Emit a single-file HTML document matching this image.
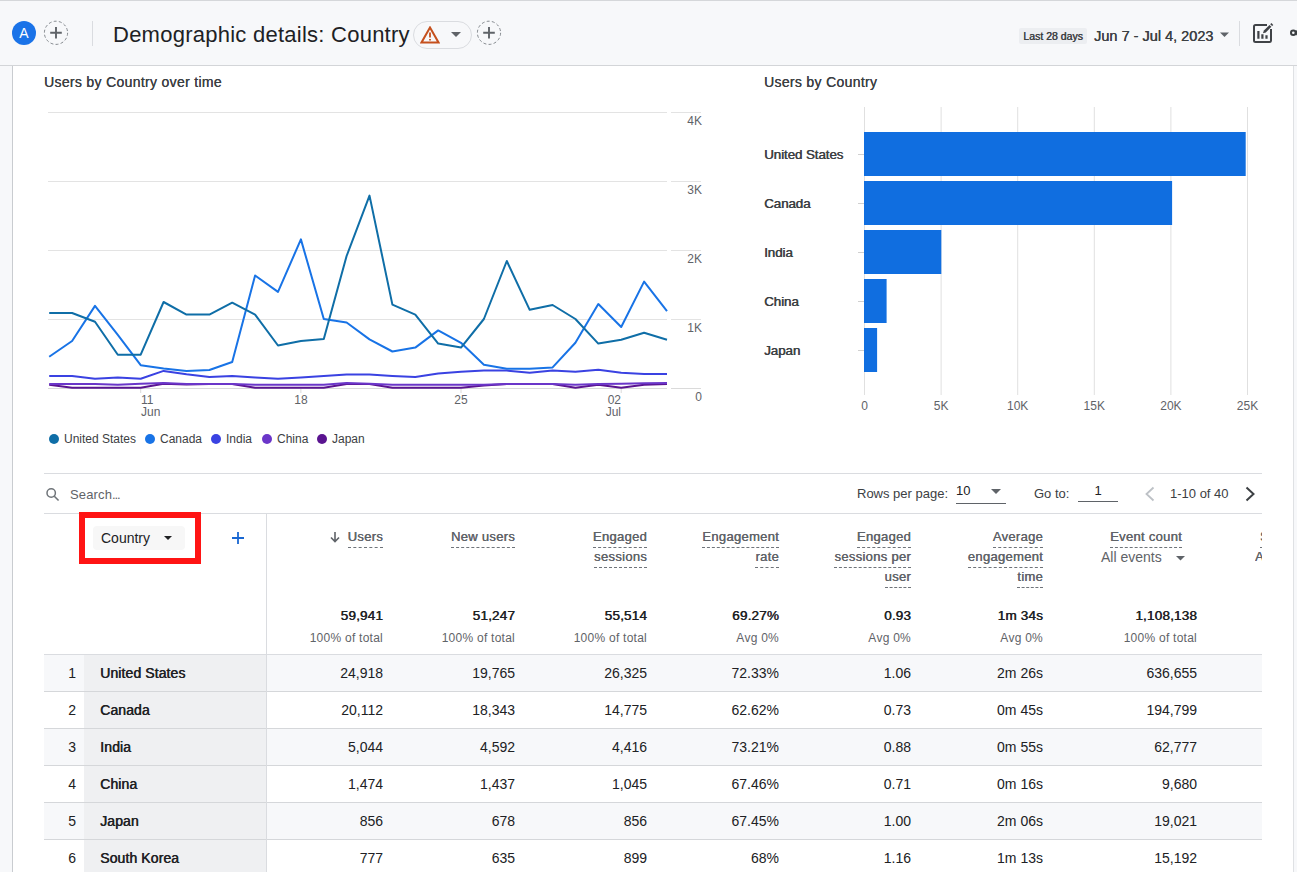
<!DOCTYPE html>
<html><head><meta charset="utf-8">
<style>
*{margin:0;padding:0;box-sizing:border-box}
html,body{width:1297px;height:872px;overflow:hidden;background:#f7f8fa;font-family:"Liberation Sans",sans-serif;color:#202124}
.a{position:absolute;white-space:nowrap}
#hdr{position:absolute;left:0;top:0;width:1297px;height:66px;background:#f7f8fa;border-top:1px solid #d5d7da;border-bottom:1px solid #d3d5d8}
#card{position:absolute;left:12px;top:66px;width:1282px;height:806px;background:#fff;border-left:1px solid #c9ccd0;border-right:1px solid #dfe1e4}
.ttl{font-size:14px;color:#3c4043;line-height:16px;letter-spacing:0.32px;text-shadow:0.15px 0 0 #3c4043}
.ylab{font-size:12px;color:#5f6368;line-height:14px}
.leg{font-size:12px;color:#3c4043;line-height:14px}
.dot{position:absolute;width:10px;height:10px;border-radius:50%}
.hd{font-size:13px;color:#5f6368;text-align:right;line-height:20px;letter-spacing:0.3px;text-shadow:0.35px 0 0 #5f6368}
.hd span{border-bottom:1px dashed #6f747a;padding-bottom:3px}
.tot{font-size:13.5px;color:#202124;text-align:right;line-height:16px;letter-spacing:0.2px;text-shadow:0.5px 0 0 #202124}
.sub{font-size:12px;color:#5f6368;text-align:right;line-height:14px;letter-spacing:0.25px}
.cell{font-size:14px;color:#202124;text-align:right;line-height:16px}
.cty{font-size:14px;color:#202124;line-height:16px;letter-spacing:0.1px;text-shadow:0.5px 0 0 #202124}
</style></head><body>
<div id="hdr"></div>
<div id="card"></div>

<div class="a" style="left:12px;top:21px;width:24px;height:24px;border-radius:50%;background:#1a73e8;color:#fff;font-size:14px;line-height:24px;text-align:center">A</div>
<svg class="a" style="left:43px;top:20px" width="26" height="26" viewBox="0 0 26 26"><circle cx="13" cy="12.8" r="11.6" fill="none" stroke="#858a8f" stroke-width="1" stroke-dasharray="3 2.2"/><path d="M13 7v11.5M7.2 12.8h11.6" stroke="#5f6368" stroke-width="1.9"/></svg>
<div class="a" style="left:92px;top:21px;width:1px;height:25px;background:#dadce0"></div>
<div class="a" style="left:113px;top:21.5px;font-size:22px;letter-spacing:0.25px;line-height:26px;color:#202124">Demographic details: Country</div>
<div class="a" style="left:413px;top:21px;width:59px;height:28px;border:1px solid #dadce0;border-radius:14px"></div>
<svg class="a" style="left:420px;top:26px" width="20" height="18" viewBox="0 0 20 18"><path d="M10 1.5 L18.5 16.5 H1.5 Z" fill="none" stroke="#c5501e" stroke-width="2" stroke-linejoin="miter"/><path d="M10 6.5v5M10 13v1.6" stroke="#c5501e" stroke-width="1.8"/></svg>
<svg class="a" style="left:451px;top:32px" width="10" height="6" viewBox="0 0 10 6"><path d="M0 0h10L5 5z" fill="#5f6368"/></svg>
<svg class="a" style="left:476px;top:20px" width="26" height="26" viewBox="0 0 26 26"><circle cx="13" cy="12.8" r="11.6" fill="none" stroke="#858a8f" stroke-width="1" stroke-dasharray="3 2.2"/><path d="M13 7v11.5M7.2 12.8h11.6" stroke="#5f6368" stroke-width="1.9"/></svg>
<div class="a" style="left:1019px;top:28px;width:68px;height:16px;background:#eceef1;border-radius:2px;font-size:10.5px;color:#3c4043;text-shadow:0.4px 0 0 #3c4043;line-height:16px;text-align:center">Last 28 days</div>
<div class="a" style="left:1094px;top:27px;font-size:14.5px;line-height:18px;color:#3c4043;text-shadow:0.3px 0 0 #3c4043">Jun 7 - Jul 4, 2023</div>
<svg class="a" style="left:1220px;top:32px" width="10" height="6" viewBox="0 0 10 6"><path d="M0 0.5h9L4.5 5z" fill="#5f6368"/></svg>
<div class="a" style="left:1239px;top:21px;width:1px;height:25px;background:#dadce0"></div>
<svg class="a" style="left:1252px;top:22px" width="24" height="24" viewBox="0 0 24 24"><path d="M15 3H3.5Q2 3 2 4.5V18.5Q2 20 3.5 20H17.5Q19 20 19 18.5V7" fill="none" stroke="#404347" stroke-width="2"/><path d="M6.4 9v7.8M10.4 12.2v4.6M14.5 13.2v3.6" stroke="#404347" stroke-width="2.2"/><path d="M10.9 11.3L11.9 8.5 17.5 2.9 19.4 4.8 13.8 10.4z" fill="#404347"/><path d="M18.2 2.2L19.4 1 21.3 2.9 20.1 4.1z" fill="#404347"/></svg>
<svg class="a" style="left:1289px;top:27px" width="12" height="12" viewBox="0 0 12 12"><circle cx="4.3" cy="5.8" r="2.3" fill="none" stroke="#3c4043" stroke-width="2"/><circle cx="10" cy="5.8" r="2.3" fill="none" stroke="#3c4043" stroke-width="2"/></svg>
<div class="a ttl" style="left:44px;top:73.5px">Users by Country over time</div>
<svg class="a" style="left:0;top:0" width="760" height="460" viewBox="0 0 760 460"><path d="M48 112.5H667M671 112.5H701" stroke="#e3e3e3" stroke-width="1"/><path d="M48 181.5H667M671 181.5H701" stroke="#e3e3e3" stroke-width="1"/><path d="M48 250.5H667M671 250.5H701" stroke="#e3e3e3" stroke-width="1"/><path d="M48 319.5H667M671 319.5H701" stroke="#e3e3e3" stroke-width="1"/><path d="M48 388.5H667M671 388.5H701" stroke="#dadada" stroke-width="1"/><path d="M140.7 389V393" stroke="#dadada" stroke-width="1"/><path d="M300.9 389V393" stroke="#dadada" stroke-width="1"/><path d="M461.0 389V393" stroke="#dadada" stroke-width="1"/><path d="M621.2 389V393" stroke="#dadada" stroke-width="1"/><path d="M49.2,384.8 L72.1,387.8 L95.0,387.8 L117.8,387.8 L140.7,387.8 L163.6,383.8 L186.5,384.5 L209.4,384.1 L232.2,384.1 L255.1,387.8 L278.0,387.8 L300.9,387.8 L323.8,387.8 L346.6,384.1 L369.5,384.1 L392.4,387.8 L415.3,387.8 L438.2,387.8 L461.0,387.8 L483.9,385.4 L506.8,384.1 L529.7,384.1 L552.6,384.1 L575.4,387.8 L598.3,384.8 L621.2,387.8 L644.1,384.8 L667.0,384.1" fill="none" stroke="#5a1490" stroke-width="2" stroke-linejoin="round"/><path d="M49.2,384.1 L72.1,384.1 L95.0,384.1 L117.8,384.8 L140.7,383.8 L163.6,382.9 L186.5,384.1 L209.4,384.1 L232.2,384.1 L255.1,384.8 L278.0,384.8 L300.9,384.8 L323.8,384.8 L346.6,382.9 L369.5,383.8 L392.4,384.8 L415.3,384.8 L438.2,384.8 L461.0,384.8 L483.9,384.8 L506.8,384.1 L529.7,384.1 L552.6,384.1 L575.4,384.8 L598.3,384.1 L621.2,383.8 L644.1,383.3 L667.0,382.9" fill="none" stroke="#6b36c9" stroke-width="2" stroke-linejoin="round"/><path d="M49.2,376.1 L72.1,376.1 L95.0,378.8 L117.8,377.6 L140.7,378.8 L163.6,370.9 L186.5,374.3 L209.4,377.0 L232.2,375.9 L255.1,377.6 L278.0,378.8 L300.9,377.6 L323.8,375.9 L346.6,374.6 L369.5,374.6 L392.4,375.9 L415.3,377.0 L438.2,373.4 L461.0,371.8 L483.9,370.6 L506.8,370.6 L529.7,372.7 L552.6,370.6 L575.4,371.8 L598.3,369.7 L621.2,372.8 L644.1,373.9 L667.0,373.9" fill="none" stroke="#3a42e2" stroke-width="2" stroke-linejoin="round"/><path d="M49.2,356.8 L72.1,341.0 L95.0,305.9 L117.8,334.9 L140.7,365.2 L163.6,368.4 L186.5,371.0 L209.4,370.0 L232.2,362.0 L255.1,275.5 L278.0,291.9 L300.9,239.4 L323.8,319.0 L346.6,322.5 L369.5,339.4 L392.4,351.5 L415.3,347.6 L438.2,330.4 L461.0,342.8 L483.9,364.7 L506.8,368.7 L529.7,368.7 L552.6,367.4 L575.4,342.8 L598.3,304.0 L621.2,327.0 L644.1,281.6 L667.0,311.2" fill="none" stroke="#1873e6" stroke-width="2" stroke-linejoin="round"/><path d="M49.2,313.0 L72.1,313.0 L95.0,321.7 L117.8,354.7 L140.7,354.7 L163.6,302.0 L186.5,314.6 L209.4,314.6 L232.2,302.7 L255.1,314.6 L278.0,345.5 L300.9,341.0 L323.8,338.9 L346.6,256.0 L369.5,195.6 L392.4,304.6 L415.3,314.6 L438.2,343.6 L461.0,347.6 L483.9,319.0 L506.8,261.0 L529.7,309.8 L552.6,305.0 L575.4,319.0 L598.3,343.6 L621.2,339.7 L644.1,332.8 L667.0,339.7" fill="none" stroke="#0f6ea7" stroke-width="2" stroke-linejoin="round"/></svg>
<div class="a ylab" style="left:660px;width:42px;text-align:right;top:114px">4K</div>
<div class="a ylab" style="left:660px;width:42px;text-align:right;top:183px">3K</div>
<div class="a ylab" style="left:660px;width:42px;text-align:right;top:252px">2K</div>
<div class="a ylab" style="left:660px;width:42px;text-align:right;top:321px">1K</div>
<div class="a ylab" style="left:660px;width:42px;text-align:right;top:390px">0</div>
<div class="a ylab" style="left:141px;top:393px">11</div>
<div class="a ylab" style="left:141px;top:405px">Jun</div>
<div class="a ylab" style="left:281px;width:40px;text-align:center;top:393px">18</div>
<div class="a ylab" style="left:441px;width:40px;text-align:center;top:393px">25</div>
<div class="a ylab" style="left:581px;width:40px;text-align:right;top:393px">02</div>
<div class="a ylab" style="left:581px;width:40px;text-align:right;top:405px">Jul</div>
<div class="dot" style="left:49px;top:434px;background:#0f6ea7"></div>
<div class="a leg" style="left:64px;top:432px">United States</div>
<div class="dot" style="left:145px;top:434px;background:#1873e6"></div>
<div class="a leg" style="left:160px;top:432px">Canada</div>
<div class="dot" style="left:211px;top:434px;background:#3a42e2"></div>
<div class="a leg" style="left:226px;top:432px">India</div>
<div class="dot" style="left:262px;top:434px;background:#6b36c9"></div>
<div class="a leg" style="left:277px;top:432px">China</div>
<div class="dot" style="left:317px;top:434px;background:#5a1490"></div>
<div class="a leg" style="left:332px;top:432px">Japan</div>
<div class="a ttl" style="left:764px;top:73.5px">Users by Country</div>
<svg class="a" style="left:740px;top:100px" width="540" height="300" viewBox="740 100 540 300"><path d="M864.5 107V395" stroke="#e0e0e0" stroke-width="1"/><path d="M941.1 107V395" stroke="#e0e0e0" stroke-width="1"/><path d="M1017.7 107V395" stroke="#e0e0e0" stroke-width="1"/><path d="M1094.3 107V395" stroke="#e0e0e0" stroke-width="1"/><path d="M1170.9 107V395" stroke="#e0e0e0" stroke-width="1"/><path d="M1247.5 107V395" stroke="#e0e0e0" stroke-width="1"/><rect x="864" y="132" width="381.7" height="44" fill="#106ee0"/><path d="M858 154.5H864" stroke="#d0d0d0" stroke-width="1"/><rect x="864" y="181" width="308.1" height="44" fill="#106ee0"/><path d="M858 203.5H864" stroke="#d0d0d0" stroke-width="1"/><rect x="864" y="230" width="77.3" height="44" fill="#106ee0"/><path d="M858 252.5H864" stroke="#d0d0d0" stroke-width="1"/><rect x="864" y="279" width="22.6" height="44" fill="#106ee0"/><path d="M858 301.5H864" stroke="#d0d0d0" stroke-width="1"/><rect x="864" y="328" width="13.1" height="44" fill="#106ee0"/><path d="M858 350.5H864" stroke="#d0d0d0" stroke-width="1"/></svg>
<div class="a" style="left:764px;top:147px;font-size:13.4px;letter-spacing:-0.1px;color:#3c4043;text-shadow:0.5px 0 0 #3c4043;line-height:16px">United States</div>
<div class="a" style="left:764px;top:196px;font-size:13.4px;letter-spacing:-0.1px;color:#3c4043;text-shadow:0.5px 0 0 #3c4043;line-height:16px">Canada</div>
<div class="a" style="left:764px;top:245px;font-size:13.4px;letter-spacing:-0.1px;color:#3c4043;text-shadow:0.5px 0 0 #3c4043;line-height:16px">India</div>
<div class="a" style="left:764px;top:294px;font-size:13.4px;letter-spacing:-0.1px;color:#3c4043;text-shadow:0.5px 0 0 #3c4043;line-height:16px">China</div>
<div class="a" style="left:764px;top:343px;font-size:13.4px;letter-spacing:-0.1px;color:#3c4043;text-shadow:0.5px 0 0 #3c4043;line-height:16px">Japan</div>
<div class="a ylab" style="left:844.5px;width:40px;text-align:center;top:399px">0</div>
<div class="a ylab" style="left:921.1px;width:40px;text-align:center;top:399px">5K</div>
<div class="a ylab" style="left:997.7px;width:40px;text-align:center;top:399px">10K</div>
<div class="a ylab" style="left:1074.3px;width:40px;text-align:center;top:399px">15K</div>
<div class="a ylab" style="left:1150.9px;width:40px;text-align:center;top:399px">20K</div>
<div class="a ylab" style="left:1227.5px;width:40px;text-align:center;top:399px">25K</div>
<div class="a" style="left:44px;top:473px;width:1218px;height:1px;background:#dadce0"></div>
<svg class="a" style="left:45px;top:487px" width="16" height="16" viewBox="0 0 16 16"><circle cx="6.2" cy="6" r="4.2" fill="none" stroke="#6f7479" stroke-width="1.5"/><path d="M9.3 9.2l4.3 4.3" stroke="#6f7479" stroke-width="1.6"/></svg>
<div class="a" style="left:70px;top:487px;font-size:13px;color:#5f6368;line-height:16px;letter-spacing:0.15px">Search<span style="letter-spacing:-1.1px">...</span></div>
<div class="a" style="left:857px;top:486px;font-size:13px;color:#3c4043;line-height:16px">Rows per page:</div>
<div class="a" style="left:956px;top:483px;font-size:13px;color:#202124;line-height:16px">10</div>
<svg class="a" style="left:991px;top:489px" width="10" height="5" viewBox="0 0 10 5"><path d="M0 0h10L5 5z" fill="#5f6368"/></svg>
<div class="a" style="left:956px;top:503px;width:50px;height:1px;background:#5f6368"></div>
<div class="a" style="left:1034px;top:486px;font-size:13px;color:#3c4043;line-height:16px">Go to:</div>
<div class="a" style="left:1078px;top:483px;width:40px;text-align:center;font-size:13px;color:#202124;line-height:16px">1</div>
<div class="a" style="left:1078px;top:501px;width:40px;height:1px;background:#5f6368"></div>
<svg class="a" style="left:1143px;top:486px" width="14" height="16" viewBox="0 0 14 16"><path d="M10.5 1.5L3.5 8l7 6.5" fill="none" stroke="#bdc1c6" stroke-width="1.8"/></svg>
<div class="a" style="left:1170px;top:486px;font-size:13px;color:#3c4043;line-height:16px">1-10 of 40</div>
<svg class="a" style="left:1243px;top:486px" width="14" height="16" viewBox="0 0 14 16"><path d="M3.5 1.5L10.5 8l-7 6.5" fill="none" stroke="#3c4043" stroke-width="2"/></svg>
<div class="a" style="left:44px;top:513px;width:1218px;height:1px;background:#dadce0"></div>
<div class="a" style="left:79px;top:512px;width:122px;height:52px;border:6px solid #ff1414"></div>
<div class="a" style="left:93px;top:526px;width:92px;height:24px;background:#f7f7f7;border-radius:4px"></div>
<div class="a" style="left:101px;top:530px;font-size:14px;color:#202124;line-height:16px">Country</div>
<svg class="a" style="left:164px;top:536px" width="8" height="4" viewBox="0 0 8 4"><path d="M0 0h8L4 4z" fill="#202124"/></svg>
<svg class="a" style="left:231px;top:531px" width="14" height="14" viewBox="0 0 14 14"><path d="M7 1v12M1 7h12" stroke="#1967d2" stroke-width="1.8"/></svg>
<div class="a" style="left:266px;top:513px;width:1px;height:359px;background:#dadce0"></div>
<div class="a hd" style="left:183px;width:200px;top:527px"><span>Users</span></div>
<div class="a hd" style="left:315px;width:200px;top:527px"><span>New users</span></div>
<div class="a hd" style="left:447px;width:200px;top:527px"><span>Engaged</span><br><span>sessions</span></div>
<div class="a hd" style="left:579px;width:200px;top:527px"><span>Engagement</span><br><span>rate</span></div>
<div class="a hd" style="left:711px;width:200px;top:527px"><span>Engaged</span><br><span>sessions per</span><br><span>user</span></div>
<div class="a hd" style="left:843px;width:200px;top:527px"><span>Average</span><br><span>engagement</span><br><span>time</span></div>
<div class="a hd" style="left:982px;width:200px;top:527px"><span>Event count</span></div>
<svg class="a" style="left:329px;top:531px" width="12" height="12" viewBox="0 0 12 12"><path d="M6 1v9.5M2 6.5l4 4 4-4" fill="none" stroke="#5f6368" stroke-width="1.6"/></svg>
<div class="a" style="left:1101px;top:549px;font-size:14px;color:#5f6368;line-height:16px">All events</div>
<svg class="a" style="left:1176px;top:556px" width="9" height="5" viewBox="0 0 9 5"><path d="M0 0h9L4.5 4.5z" fill="#5f6368"/></svg>
<div class="a" style="left:1255px;top:520px;width:7px;height:60px;overflow:hidden"><div class="a hd" style="left:0;top:7px;text-align:left"><span style="margin-left:5px">S</span><br>All</div></div>
<div class="a tot" style="left:183px;width:200px;top:608px">59,941</div>
<div class="a sub" style="left:183px;width:200px;top:631px">100% of total</div>
<div class="a tot" style="left:315px;width:200px;top:608px">51,247</div>
<div class="a sub" style="left:315px;width:200px;top:631px">100% of total</div>
<div class="a tot" style="left:447px;width:200px;top:608px">55,514</div>
<div class="a sub" style="left:447px;width:200px;top:631px">100% of total</div>
<div class="a tot" style="left:579px;width:200px;top:608px">69.27%</div>
<div class="a sub" style="left:579px;width:200px;top:631px">Avg 0%</div>
<div class="a tot" style="left:711px;width:200px;top:608px">0.93</div>
<div class="a sub" style="left:711px;width:200px;top:631px">Avg 0%</div>
<div class="a tot" style="left:843px;width:200px;top:608px">1m 34s</div>
<div class="a sub" style="left:843px;width:200px;top:631px">Avg 0%</div>
<div class="a tot" style="left:997px;width:200px;top:608px">1,108,138</div>
<div class="a sub" style="left:997px;width:200px;top:631px">100% of total</div>
<div class="a" style="left:44px;top:654px;width:1218px;height:1px;background:#dadce0"></div>
<div class="a" style="left:44px;top:655px;width:1218px;height:36px;background:#f7f8fa"></div>
<div class="a" style="left:84px;top:655px;width:182px;height:36px;background:#eff0f2"></div>
<div class="a" style="left:44px;top:691px;width:1218px;height:1px;background:#d5d7da"></div>
<div class="a cell" style="left:36px;width:40px;top:665px">1</div>
<div class="a cty" style="left:100px;top:665px">United States</div>
<div class="a cell" style="left:183px;width:200px;top:665px">24,918</div>
<div class="a cell" style="left:315px;width:200px;top:665px">19,765</div>
<div class="a cell" style="left:447px;width:200px;top:665px">26,325</div>
<div class="a cell" style="left:579px;width:200px;top:665px">72.33%</div>
<div class="a cell" style="left:711px;width:200px;top:665px">1.06</div>
<div class="a cell" style="left:843px;width:200px;top:665px">2m 26s</div>
<div class="a cell" style="left:997px;width:200px;top:665px">636,655</div>
<div class="a" style="left:44px;top:692px;width:1218px;height:36px;background:#ffffff"></div>
<div class="a" style="left:84px;top:692px;width:182px;height:36px;background:#eff0f2"></div>
<div class="a" style="left:44px;top:728px;width:1218px;height:1px;background:#d5d7da"></div>
<div class="a cell" style="left:36px;width:40px;top:702px">2</div>
<div class="a cty" style="left:100px;top:702px">Canada</div>
<div class="a cell" style="left:183px;width:200px;top:702px">20,112</div>
<div class="a cell" style="left:315px;width:200px;top:702px">18,343</div>
<div class="a cell" style="left:447px;width:200px;top:702px">14,775</div>
<div class="a cell" style="left:579px;width:200px;top:702px">62.62%</div>
<div class="a cell" style="left:711px;width:200px;top:702px">0.73</div>
<div class="a cell" style="left:843px;width:200px;top:702px">0m 45s</div>
<div class="a cell" style="left:997px;width:200px;top:702px">194,799</div>
<div class="a" style="left:44px;top:729px;width:1218px;height:36px;background:#f7f8fa"></div>
<div class="a" style="left:84px;top:729px;width:182px;height:36px;background:#eff0f2"></div>
<div class="a" style="left:44px;top:765px;width:1218px;height:1px;background:#d5d7da"></div>
<div class="a cell" style="left:36px;width:40px;top:739px">3</div>
<div class="a cty" style="left:100px;top:739px">India</div>
<div class="a cell" style="left:183px;width:200px;top:739px">5,044</div>
<div class="a cell" style="left:315px;width:200px;top:739px">4,592</div>
<div class="a cell" style="left:447px;width:200px;top:739px">4,416</div>
<div class="a cell" style="left:579px;width:200px;top:739px">73.21%</div>
<div class="a cell" style="left:711px;width:200px;top:739px">0.88</div>
<div class="a cell" style="left:843px;width:200px;top:739px">0m 55s</div>
<div class="a cell" style="left:997px;width:200px;top:739px">62,777</div>
<div class="a" style="left:44px;top:766px;width:1218px;height:36px;background:#ffffff"></div>
<div class="a" style="left:84px;top:766px;width:182px;height:36px;background:#eff0f2"></div>
<div class="a" style="left:44px;top:802px;width:1218px;height:1px;background:#d5d7da"></div>
<div class="a cell" style="left:36px;width:40px;top:776px">4</div>
<div class="a cty" style="left:100px;top:776px">China</div>
<div class="a cell" style="left:183px;width:200px;top:776px">1,474</div>
<div class="a cell" style="left:315px;width:200px;top:776px">1,437</div>
<div class="a cell" style="left:447px;width:200px;top:776px">1,045</div>
<div class="a cell" style="left:579px;width:200px;top:776px">67.46%</div>
<div class="a cell" style="left:711px;width:200px;top:776px">0.71</div>
<div class="a cell" style="left:843px;width:200px;top:776px">0m 16s</div>
<div class="a cell" style="left:997px;width:200px;top:776px">9,680</div>
<div class="a" style="left:44px;top:803px;width:1218px;height:36px;background:#f7f8fa"></div>
<div class="a" style="left:84px;top:803px;width:182px;height:36px;background:#eff0f2"></div>
<div class="a" style="left:44px;top:839px;width:1218px;height:1px;background:#d5d7da"></div>
<div class="a cell" style="left:36px;width:40px;top:813px">5</div>
<div class="a cty" style="left:100px;top:813px">Japan</div>
<div class="a cell" style="left:183px;width:200px;top:813px">856</div>
<div class="a cell" style="left:315px;width:200px;top:813px">678</div>
<div class="a cell" style="left:447px;width:200px;top:813px">856</div>
<div class="a cell" style="left:579px;width:200px;top:813px">67.45%</div>
<div class="a cell" style="left:711px;width:200px;top:813px">1.00</div>
<div class="a cell" style="left:843px;width:200px;top:813px">2m 06s</div>
<div class="a cell" style="left:997px;width:200px;top:813px">19,021</div>
<div class="a" style="left:44px;top:840px;width:1218px;height:36px;background:#ffffff"></div>
<div class="a" style="left:84px;top:840px;width:182px;height:36px;background:#eff0f2"></div>
<div class="a" style="left:44px;top:876px;width:1218px;height:1px;background:#d5d7da"></div>
<div class="a cell" style="left:36px;width:40px;top:850px">6</div>
<div class="a cty" style="left:100px;top:850px">South Korea</div>
<div class="a cell" style="left:183px;width:200px;top:850px">777</div>
<div class="a cell" style="left:315px;width:200px;top:850px">635</div>
<div class="a cell" style="left:447px;width:200px;top:850px">899</div>
<div class="a cell" style="left:579px;width:200px;top:850px">68%</div>
<div class="a cell" style="left:711px;width:200px;top:850px">1.16</div>
<div class="a cell" style="left:843px;width:200px;top:850px">1m 13s</div>
<div class="a cell" style="left:997px;width:200px;top:850px">15,192</div>
<div class="a" style="left:266px;top:654px;width:1px;height:218px;background:#dadce0"></div>
</body></html>
